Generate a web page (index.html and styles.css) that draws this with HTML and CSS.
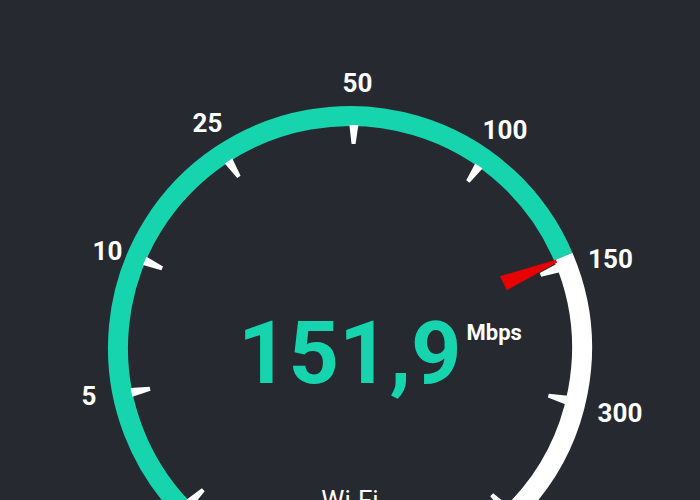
FILE: index.html
```html
<!DOCTYPE html>
<html lang="en">
<head>
  <meta charset="UTF-8" />
  <title>Speed test</title>
  <link rel="stylesheet" href="styles.css">
</head>
<body>
  <div class="screen">
    <svg class="gauge" viewBox="0 0 700 500" width="700" height="500">
      <!-- dial: filled part up to the needle, rest white -->
      <path class="arc arc-done" d="M185.95 512.05 A232 232 0 1 1 563.23 256.62" />
      <path class="arc arc-rest" d="M563.23 256.62 A232 232 0 0 1 514.05 512.05" />

      <g class="ticks">
        <polygon points="345.5,125 354.5,125 352,144 348,144" transform="rotate(-134 350 348)" />
        <polygon points="345.5,125 354.5,125 352,144 348,144" transform="rotate(-101.5 350 348)" />
        <polygon points="345.5,125 354.5,125 352,144 348,144" transform="rotate(-67 350 348)" />
        <polygon points="345.5,125 354.5,125 352,144 348,144" transform="rotate(-33 350 348)" />
        <polygon points="345.5,125 354.5,125 352,144 348,144" transform="rotate(1 350 348)" />
        <polygon points="345.5,125 354.5,125 352,144 348,144" transform="rotate(35.3 350 348)" />
        <polygon points="345.5,125 354.5,125 352,144 348,144" transform="rotate(69 350 348)" />
        <polygon points="345.5,125 354.5,125 352,144 348,144" transform="rotate(103.5 350 348)" />
        <polygon points="345.5,125 354.5,125 352,144 348,144" transform="rotate(136 350 348)" />
      </g>

      <polygon class="needle" points="348.5,124 351.5,124 357.5,181 342,182" transform="rotate(67.2 350 348)" />

      <g class="labels">
        <text x="89" y="405">5</text>
        <text x="107.5" y="259.5">10</text>
        <text x="207.5" y="132">25</text>
        <text x="357.5" y="92">50</text>
        <text x="505" y="139">100</text>
        <text x="610.5" y="267.5">150</text>
        <text x="620" y="421.5">300</text>
      </g>
    </svg>

    <div class="readout">
      <span class="value">151,9</span>
      <span class="unit">Mbps</span>
    </div>

    <div class="network">Wi-Fi</div>
  </div>
</body>
</html>
```

FILE: styles.css
```css
* {
  box-sizing: border-box;
  margin: 0;
  padding: 0;
}

html, body {
  height: 100%;
  background: #262a30;
  font-family: Roboto, 'Liberation Sans', sans-serif;
  color: #fff;
  overflow: hidden;
}

.screen {
  position: relative;
  width: 700px;
  height: 500px;
}

.gauge {
  display: block;
}

.arc {
  fill: none;
  stroke-width: 20;
}

.arc-done {
  stroke: #15d4ae;
}

.arc-rest {
  stroke: #fff;
}

.ticks polygon {
  fill: #fff;
}

.needle {
  fill: #e80000;
}

.labels text {
  fill: #fff;
  font-family: Roboto, 'Liberation Sans', sans-serif;
  font-weight: 700;
  font-size: 26px;
  text-anchor: middle;
}

.readout {
  position: absolute;
  top: 309px;
  left: 238px;
  display: flex;
  align-items: flex-start;
}

.value {
  font-size: 88px;
  font-weight: 700;
  line-height: 1;
  color: #15d4ae;
}

.unit {
  margin: 13px 0 0 5px;
  font-size: 22px;
  font-weight: 700;
  line-height: 1;
}

.network {
  position: absolute;
  top: 487px;
  left: 0;
  right: 0;
  text-align: center;
  font-size: 26px;
  line-height: 1;
}
```
